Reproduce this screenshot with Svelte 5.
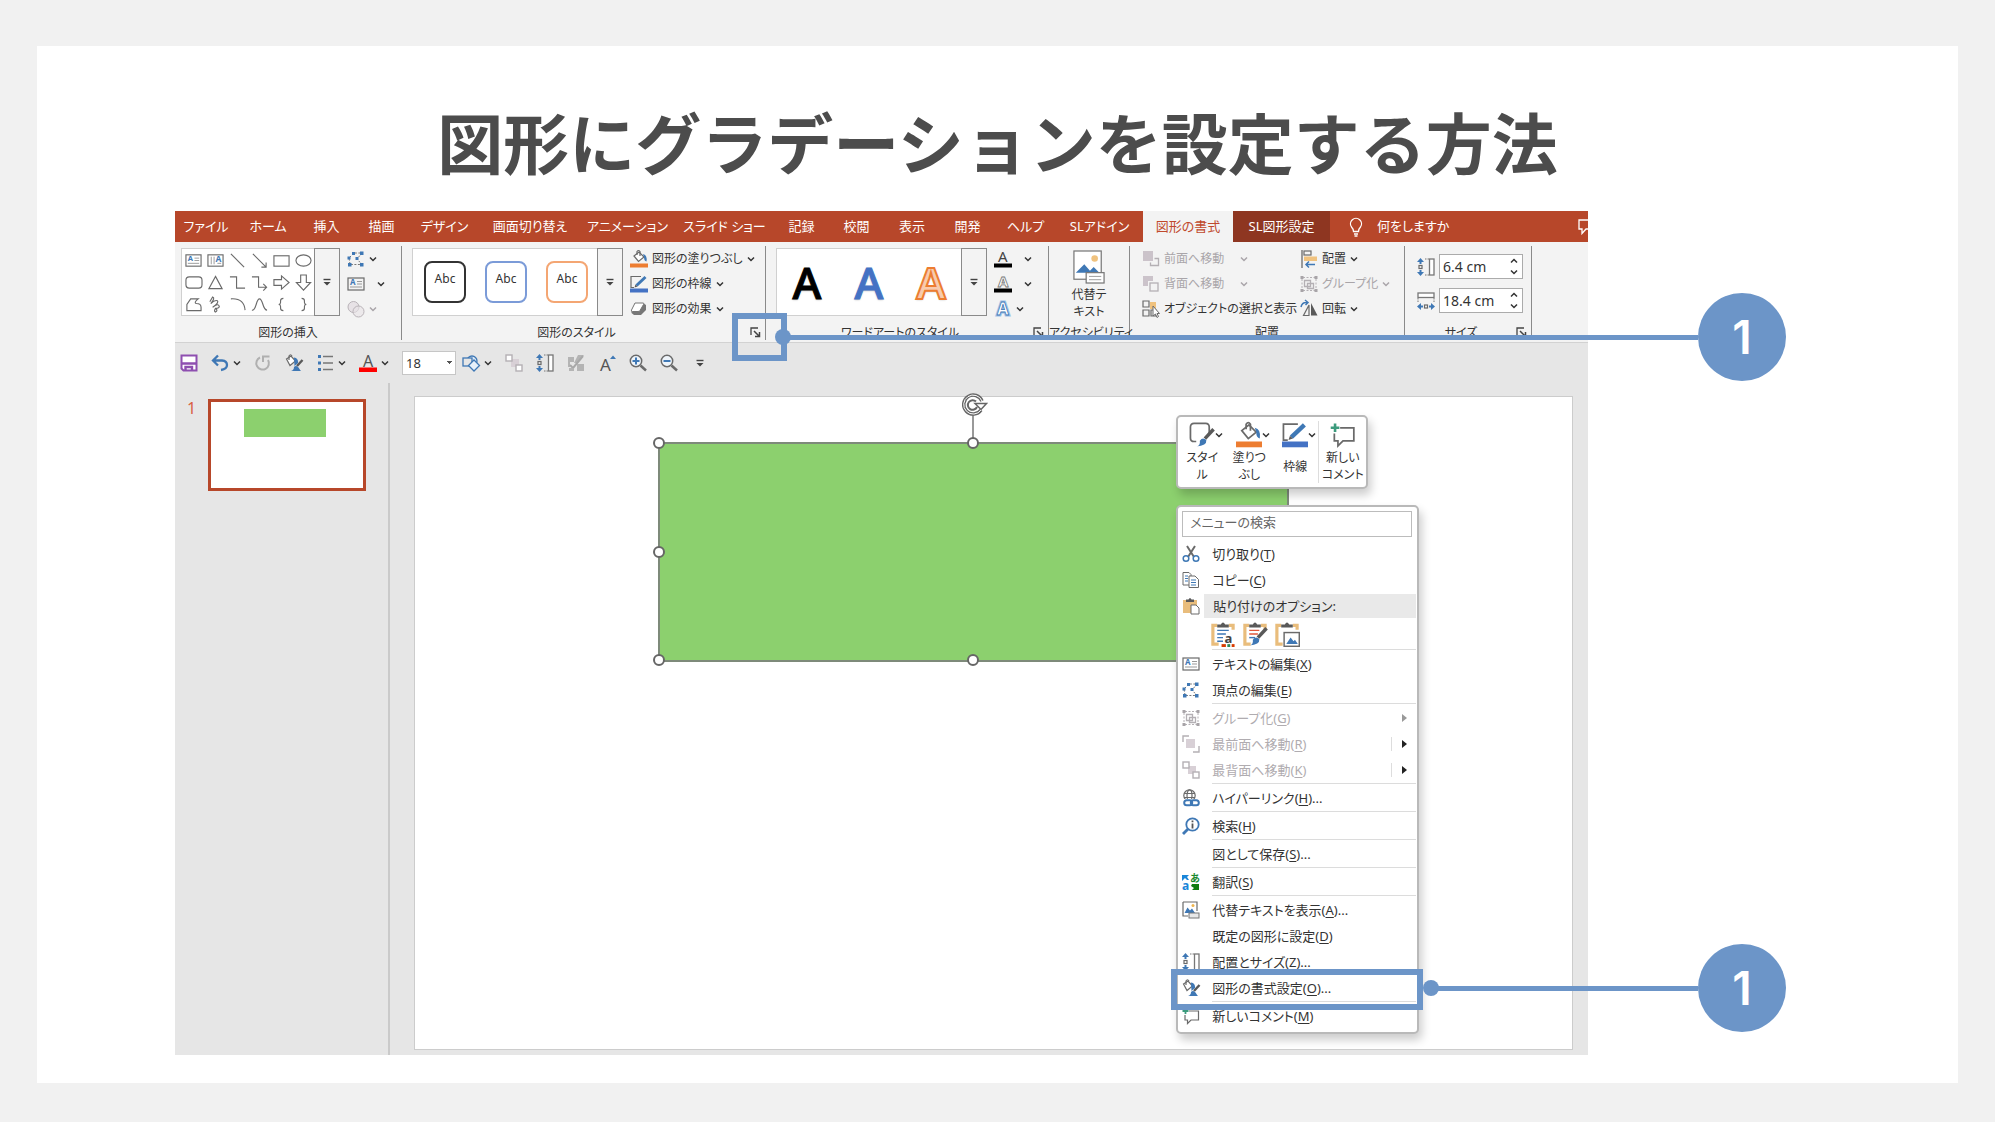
<script>
  const tabs = [
    'ファイル', 'ホーム', '挿入', '描画', 'デザイン', '画面切り替え', 'アニメーション',
    'スライド ショー', '記録', '校閲', '表示', '開発', 'ヘルプ', 'SLアドイン',
    '図形の書式', 'SL図形設定'
  ];

  const shapes = [
    'textbox', 'vtext', 'line', 'arrowline', 'rect', 'oval',
    'round', 'triangle', 'elbow', 'elbowarrow', 'rightarrow', 'downarrow',
    'freeform', 'scribble', 'arc', 'curve', 'lbrace', 'rbrace'
  ];

  const menu = [
    { icon: 'cut', label: '切り取り', key: 'T' },
    { icon: 'copy', label: 'コピー', key: 'C' },
    { paste: true },
    { sep: true },
    { icon: 'textbox', label: 'テキストの編集', key: 'X' },
    { icon: 'points', label: '頂点の編集', key: 'E' },
    { sep: true },
    { icon: 'group', label: 'グループ化', key: 'G', off: true, sub: 'off' },
    { icon: 'front', label: '最前面へ移動', key: 'R', off: true, sub: 'split' },
    { icon: 'back', label: '最背面へ移動', key: 'K', off: true, sub: 'split' },
    { sep: true },
    { icon: 'link', label: 'ハイパーリンク', key: 'H', more: true },
    { sep: true },
    { icon: 'lookup', label: '検索', key: 'H' },
    { sep: true },
    { icon: '', label: '図として保存', key: 'S', more: true },
    { sep: true },
    { icon: 'translate', label: '翻訳', key: 'S' },
    { sep: true },
    { icon: 'alt', label: '代替テキストを表示', key: 'A', more: true },
    { icon: '', label: '既定の図形に設定', key: 'D' },
    { icon: 'height', label: '配置とサイズ', key: 'Z', more: true },
    { icon: 'format', label: '図形の書式設定', key: 'O', more: true },
    { sep: true },
    { icon: 'comment', label: '新しいコメント', key: 'M' }
  ];

  const g = 'fill="none" stroke="#6a6a6a" stroke-width="1.2"';
  const b = 'fill="none" stroke="#3f78b5" stroke-width="1.5"';
  const sans = 'font-family="Noto Sans, sans-serif"';
  const boardBase = '<path d="M5 3H2V16H6M13 3H16V6" fill="none" stroke="#e9bd7c" stroke-width="2.2"/><path d="M5 4.500V2.500H7.500Q9-.5 10.500 2.500H13V4.500Z" fill="#595959"/>';
  const brush = '<path d="M17 5L11 11.500" stroke="#595959" stroke-width="2.400"/><path d="M5 17Q8 16.500 7.500 13Q9.500 10 12 12.500Q12.500 16.500 5 17Z" fill="#3f78b5"/>';

  const icons = {
    textbox: `<rect x="1" y="3" width="16" height="12" ${g}/><text x="3" y="10" ${sans} font-size="8" font-weight="700" fill="#3f78b5">A</text><path d="M10 6.500H15M10 9H15M3 12H15" stroke="#999"/>`,
    vtext: `<rect x="1" y="3" width="16" height="12" ${g}/><path d="M4.500 5V13M7.500 5V13M11 12H15" stroke="#999"/><text x="9" y="11" ${sans} font-size="9" font-weight="700" fill="#3f78b5">A</text>`,
    line: `<path d="M2 2L16 16" ${g}/>`,
    arrowline: `<path d="M2 2L16 16M16 11V16H11" ${g}/>`,
    rect: `<rect x="1" y="4" width="16" height="11" ${g}/>`,
    oval: `<ellipse cx="9" cy="9" rx="8" ry="6" ${g}/>`,
    round: `<rect x="1" y="3" width="17" height="12" rx="3.500" ${g}/>`,
    triangle: `<path d="M9 2.500L16 15.500H2Z" ${g}/>`,
    elbow: `<path d="M1 3H8V15H17" ${g}/>`,
    elbowarrow: `<path d="M1 3H8V14H16M13 10.500L16.500 14L13 17.500" ${g}/>`,
    rightarrow: `<path d="M1 6H9V2L17 9L9 16V12H1Z" ${g}/>`,
    downarrow: `<path d="M6 1V9H1.500L9 17L16.500 9H12V1Z" ${g}/>`,
    freeform: `<path d="M2 15.500V9L6 3H14Q9 7 12 8Q17 8 17 12V15.500Z" ${g}/>`,
    scribble: `<path d="M3 6L6 1Q9 2 4 8Q8 4 11 5Q13 7 6 12Q12 7 13 11Q13 13 9 13Q7 16 9 17Q12 15 9 13" ${g}/>`,
    arc: `<path d="M2 3Q16 2 17 15" ${g}/>`,
    curve: `<path d="M1 15C6 16 5 3 9 3S12 15 17 15" ${g}/>`,
    lbrace: `<path d="M11 2.500Q8 2.500 8 5V7Q8 9 6 9Q8 9 8 11V13Q8 15.500 11 15.500" ${g}/>`,
    rbrace: `<path d="M7 2.500Q10 2.500 10 5V7Q10 9 12 9Q10 9 10 11V13Q10 15.500 7 15.500" ${g}/>`,
    points: `<path d="M3 14L2 8L7 3H15L10 9L15 14.500H3" fill="none" stroke="#777" stroke-dasharray="2 1.500"/><path d="M5 2H8V5H5ZM13 1.500H16.500V5H13ZM.5 6.500H3.500V9.500H.5ZM8.500 7H11.500V10H8.500ZM1 13H4.500V16.500H1ZM13 13H16.500V16.500H13Z" fill="#3f78b5"/>`,
    merge: `<circle cx="6.500" cy="7" r="5.500" fill="#e7e2e6" stroke="#b9b3b8"/><circle cx="11.500" cy="11.500" r="5.500" fill="#e7e2e6" fill-opacity=".6" stroke="#b9b3b8"/>`,
    fill: `<path d="M4 6L9 2L14 7L8.500 11.500Z" fill="#fff" stroke="#6a6a6a" stroke-width="1.200"/><path d="M7 5V1.500Q8.500-.5 10 1.500V6" ${g}/><path d="M13 4Q17.500 5 16.500 11.500Q14 11 14 7Z" fill="#3f78b5"/><rect x="0" y="13.500" width="18" height="4" fill="#ed7d31"/>`,
    outline: `<path d="M11 1.500H1V12.500H4" ${g}/><path d="M6.500 10.500L15.500 2" stroke="#3f78b5" stroke-width="3"/><path d="M4.500 12.500L5.500 9.500L7.500 11.500Z" fill="#595959"/><rect x="0" y="13.500" width="18" height="4" fill="#4472c4"/>`,
    effect: `<path d="M5 3H13L16 5V10L11 15H4L1.500 13V11Z" fill="#777"/><path d="M5 3H13Q14.500 3 13.500 4.500L10 10.500Q9.500 11.500 8 11.500H2.500Q.8 11.500 1.500 10Z" fill="#fff" stroke="#777"/>`,
    textfill: `<text x="4" y="12" ${sans} font-size="15" fill="#444">A</text><rect y="13.500" width="18" height="4" fill="#000"/>`,
    textline: `<text x="4" y="12" ${sans} font-size="15" font-weight="700" fill="#fff" stroke="#777" stroke-width=".8">A</text><rect y="13.500" width="18" height="4" fill="#000"/>`,
    textglow: `<text x="3" y="15" ${sans} font-size="17" font-weight="700" fill="#fff" stroke="#9fc3e8" stroke-width="3">A</text><text x="3" y="15" ${sans} font-size="17" font-weight="700" fill="#fff" stroke="#3f78b5" stroke-width=".8">A</text>`,
    forward: `<rect x="1" y="1" width="10" height="10" fill="#cbc3ca"/><path d="M12.500 8.500H16.500V15.500H8.500V12.500" fill="none" stroke="#b4b0b4" stroke-width="1.300"/>`,
    backward: `<path d="M1 1H11V6H6V11H1Z" fill="#cbc3ca"/><rect x="8" y="8" width="8" height="8" fill="none" stroke="#b4b0b4" stroke-width="1.300"/>`,
    front: `<rect x="4" y="4" width="9" height="9" fill="#d8d0d6"/><path d="M7 1H1V7M17 11V17H11" fill="none" stroke="#b4b0b4" stroke-width="1.400"/>`,
    back: `<rect x="6" y="5" width="8" height="8" fill="#d8d0d6"/><g fill="#fff" stroke="#b4b0b4" stroke-width="1.400"><rect x="1" y="1" width="6" height="6"/><rect x="11" y="11" width="6" height="6"/></g>`,
    select: `<path d="M1 1H7V7H1ZM1 10H7V16H1ZM9 10H14V16H9Z" ${g}/><rect x="8" y="2" width="6" height="7" fill="#f0c27e"/><path d="M11 6V16L13.500 14L15 17.500L16.500 16.500L15 13.500H17.500Z" fill="#fff" stroke="#6a6a6a"/>`,
    align: `<path d="M2 0V18" stroke="#6a6a6a" stroke-width="1.300"/><rect x="4" y="1" width="7" height="4" ${g}/><rect x="4" y="6.500" width="13" height="4.500" fill="#f0c27e"/><path d="M15 14.500H6M9 11.500L6 14.500L9 17.500" ${b}/>`,
    group: `<path d="M3 2.500H15M3 15.500H15M2 4V14M16 4V14" stroke="#b4b0b4" stroke-dasharray="2 1.500"/><path d="M4.500 5.500H10.500V11.500H4.500ZM7.500 8.500H13.500V13.500H7.500Z" fill="none" stroke="#b4b0b4" stroke-width="1.300"/><path d="M.5 1H3.500V4H.5ZM14.500 1H17.500V4H14.500ZM.5 14H3.500V17H.5ZM14.500 14H17.500V17H14.500Z" fill="#a8a4a8"/>`,
    rotate: `<path d="M11 3V15.500H17.500Z" fill="#595959"/><path d="M9 5V15.500H3.500Z" ${g}/><path d="M1 7Q2 2 7 2.500M5 0L8 2.500L5.500 5" ${b}/>`,
    height: `<path d="M3.500 0L7 4H4.500V6H2.500V4H0ZM3.500 18L7 14H4.500V12H2.500V14H0Z" fill="#3f78b5"/><rect x="2" y="7.500" width="3" height="3" ${g}/><path d="M8 1H12M8 17H12" stroke="#777" stroke-dasharray="1.500 1"/><rect x="12.500" y="1" width="4.500" height="16" fill="#fff" stroke="#777" stroke-width="1.300"/>`,
    width: `<path d="M0 14.500L4 11V13.500H6V15.500H4V18ZM18 14.500L14 11V13.500H12V15.500H14V18Z" fill="#3f78b5"/><rect x="7.500" y="13" width="3" height="3" ${g}/><path d="M1 6V10M17 6V10" stroke="#777" stroke-dasharray="1.500 1"/><rect x="1" y="1" width="16" height="4.500" fill="#fff" stroke="#777" stroke-width="1.300"/>`,
    save: `<path d="M1.500 1.500H16.500V16.500H3.500L1.500 14.500Z" fill="#fff" stroke="#8e4fb0" stroke-width="2"/><path d="M2 9.500H16M5.500 17V13H12V17" fill="none" stroke="#8e4fb0" stroke-width="2.400"/>`,
    undo: `<path d="M7 1.500L2 6.500L7 11.500M2 6.500H11Q16 7 16 11Q16 15 10 16" fill="none" stroke="#3f78b5" stroke-width="2.300"/>`,
    redo: `<path d="M6 3.500A6.300 6.300 0 1 0 14 6M9 8V2.500H15.500" fill="none" stroke="#b0b0b0" stroke-width="2"/>`,
    format: `<path d="M1.500 5L6 2L10.500 7L5 11.500Z" fill="#fff" stroke="#6a6a6a" stroke-width="1.200"/><path d="M4 6V2Q5.500-.5 7 2" ${g}/><path d="M9 3.500Q13.500 4 13 9L9.500 12Z" fill="#3f78b5"/><path d="M17.500 6L12 12" stroke="#595959" stroke-width="2.400"/><path d="M6 17Q9 16 9 13Q11 11 13.500 13.500Q15 16 16 17Z" fill="#3f78b5"/>`,
    bullets: `<path d="M2 1H5V4H2ZM2 7.500H5V10.500H2ZM2 14H5V17H2Z" fill="#3f78b5"/><path d="M7 2.500H17M7 9H17M7 15.500H17" stroke="#777" stroke-width="1.300"/>`,
    fontcolor: `<text x="4" y="13" ${sans} font-size="16" fill="#555">A</text><rect y="13.500" width="18" height="4.500" fill="#f00"/>`,
    shapes: `<circle cx="10" cy="7" r="5" fill="#dce9f6" stroke="#3f78b5" stroke-width="1.300"/><rect x="1" y="4" width="9" height="8" fill="#e6e6e6" stroke="#3f78b5" stroke-width="1.300"/><path d="M12 6L17.500 11.500L12 17L6.500 11.500Z" fill="#e6f0fa" stroke="#3f78b5" stroke-width="1.300"/>`,
    grayed: `<path d="M1 3H7V8H3V13H1ZM11 1L17 1L10 9L7 9Z" fill="#b4b4b4"/><path d="M3 11L6 14L16 2" fill="none" stroke="#a8a8a8" stroke-width="2"/><path d="M10 10H17V17H10ZM2 14H7V17H2Z" fill="#b4b4b4"/>`,
    grow: `<text x="2" y="17" ${sans} font-size="17" fill="#555">A</text><path d="M12 5L15 1.500L18 5Z" fill="#3f78b5"/>`,
    zoomin: `<circle cx="7" cy="7" r="5.700" fill="#eef4fa" stroke="#6a6a6a" stroke-width="1.500"/><path d="M11.500 11.500L17 16.500" stroke="#6a6a6a" stroke-width="2.500"/><path d="M3.500 7H10.500M7 3.500V10.500" stroke="#3f78b5" stroke-width="2"/>`,
    zoomout: `<circle cx="7" cy="7" r="5.700" fill="#eef4fa" stroke="#6a6a6a" stroke-width="1.500"/><path d="M11.500 11.500L17 16.500" stroke="#6a6a6a" stroke-width="2.500"/><path d="M3.500 7H10.500" stroke="#3f78b5" stroke-width="2"/>`,
    more: `<path d="M5.500 6.500H12.500" stroke="#444" stroke-width="1.400"/><path d="M5.500 9H12.500L9 12.500Z" fill="#444"/>`,
    launch: `<path d="M3 10V3H10" fill="none" stroke="#444" stroke-width="1.300"/><path d="M6 6L11 11M11.500 7V11.500H7" fill="none" stroke="#444" stroke-width="1.500"/>`,
    cut: `<path d="M5 1L12 12M13 1L6 12" stroke="#6a6a6a" stroke-width="2"/><circle cx="4" cy="13.500" r="2.800" ${b}/><circle cx="14" cy="13.500" r="2.800" ${b}/>`,
    copy: `<path d="M1 1.500H7L9 3.500V14H1Z" fill="#fff" stroke="#6a6a6a"/><path d="M3 5H6M3 7.500H6M3 10H6" stroke="#3f78b5"/><path d="M7 5H13L16.500 8.500V16.500H7Z" fill="#fff" stroke="#6a6a6a"/><path d="M9 9H14M9 11.500H14M9 14H14" stroke="#3f78b5"/>`,
    paste: `<path d="M1 3H15V8H9V16H1Z" fill="#e9bd7c"/><path d="M4 5V2.500H6.500Q8-.5 9.500 2.500H12V5Z" fill="#595959"/><path d="M9 8H14L17 11V17H9Z" fill="#fff" stroke="#6a6a6a"/>`,
    pastea: `${boardBase}<path d="M5 6.500H13M5 9H11M5 11.500H9M5 14H9" stroke="#3f78b5"/><text x="10" y="15" ${sans} font-size="9" font-weight="700" fill="#444">a</text><path d="M8 16H11V18H8Z" fill="#d83b01"/><path d="M12 16H14V18H12Z" fill="#2e8b57"/><path d="M15 16H17V18H15Z" fill="#d83b01"/>`,
    pasteb: `${boardBase}<path d="M5 6.500H12M5 9H11" stroke="#e0583c"/><path d="M5 11.500H9" stroke="#3f78b5"/>${brush}`,
    pastec: `${boardBase}<rect x="7" y="8" width="10.500" height="9.500" fill="#fff" stroke="#6a6a6a"/><path d="M8.500 16L11.500 11.500L13.500 14L14.500 13L16.500 16Z" fill="#3f78b5"/>`,
    link: `<circle cx="7.500" cy="6.500" r="5.700" ${g}/><ellipse cx="7.500" cy="6.500" rx="2.500" ry="5.700" ${g}/><path d="M2 4.500H13M2 8.500H13" stroke="#6a6a6a"/><path d="M0 10H18V18H0Z" fill="#fff"/><rect x="2.200" y="11.200" width="8" height="5" rx="2.500" fill="none" stroke="#3f78b5" stroke-width="2"/><rect x="8.800" y="11.200" width="8" height="5" rx="2.500" fill="none" stroke="#3f78b5" stroke-width="2"/>`,
    lookup: `<circle cx="10.500" cy="7.500" r="6.200" fill="none" stroke="#3f78b5" stroke-width="1.800"/><path d="M6 12L1 17" stroke="#3f78b5" stroke-width="2.800"/><path d="M10.500 3.500V5.200M10.500 6.500V11.500" stroke="#555" stroke-width="1.800"/>`,
    translate: `<path d="M0 2H7L5 4L7 7H5L3 5L0 8Z" fill="#1a86d9"/><text x="0" y="17" ${sans} font-size="12" font-weight="700" fill="#1a86d9">a</text><text x="8" y="9" font-family="Noto Sans CJK JP, sans-serif" font-size="10" font-weight="700" fill="#1b8a2f">あ</text><path d="M10 11H17V17H10L12 15L9 13Z" fill="#107c10"/>`,
    alt: `<path d="M1 1H15V10M6 15H1V1" ${g}/><circle cx="11" cy="4.500" r="1.500" fill="#f0b54e"/><path d="M2.500 12L5.500 6.500L8 9.500L10 7.500L13 12Z" fill="#3f78b5"/><rect x="7" y="12" width="10" height="5" fill="#e8e8e8" stroke="#777"/>`,
    comment: `<path d="M7 4H16.500V13H9L5.500 16.500V13H3V8" ${g}/><path d="M.5 4H6.500M3.500 1V7" stroke="#3c9b7d" stroke-width="1.800"/>`,
    style: `<path d="M14 8V3.500Q14 1 11.500 1H3.500Q1 1 1 3.500V11Q1 13.500 3.500 13.500H5" ${g}/>${brush}`
  };
</script>

{#snippet icon(name, cls = '')}
  <svg class="icon {cls}" viewBox="0 0 18 18" aria-hidden="true">{@html icons[name]}</svg>
{/snippet}

{#snippet chev(cls = '')}
  <svg class="chev {cls}" viewBox="0 0 8 8" aria-hidden="true">
    <path d="M1 2.500L4 5.500L7 2.500" fill="none" stroke="currentColor" stroke-width="1.500" />
  </svg>
{/snippet}

{#snippet tool(name, text, arrow = true, cls = '')}
  <button class="tool {cls}" aria-label={text || name}>
    {@render icon(name)}{#if text}<span>{text}</span>{/if}{#if arrow}{@render chev()}{/if}
  </button>
{/snippet}

{#snippet launcher(name)}
  <button class="launcher" aria-label={name}>
    <svg viewBox="0 0 14 14">{@html icons.launch}</svg>
  </button>
{/snippet}

{#snippet size(id, name, label, value)}
  <div class="size">
    <label for={id} aria-label={label}>{@render icon(name)}</label>
    <span class="spin">
      <input {id} type="text" {value} />
      <span class="steps">
        <button aria-label="{label}を増やす">{@render chev('up')}</button>
        <button aria-label="{label}を減らす">{@render chev()}</button>
      </span>
    </span>
  </div>
{/snippet}

<main>
  <article>
    <h1>図形にグラデーションを設定する方法</h1>

    <section class="app">
      <nav class="tabs">
        {#each tabs as tab, i}
          <button class:active={i === 14} class:dark={i === 15}>{tab}</button>
        {/each}
        <button class="tell">
          <svg class="bulb" viewBox="0 0 14 20" aria-hidden="true">
            <path d="M4.500 14.500Q4.500 12 2.500 10A5.500 5.500 0 1 1 11.500 10Q9.500 12 9.500 14.500ZM5 17H9M5.500 19H8.500" fill="none" stroke="#fff" stroke-width="1.300" />
          </svg>
          <span>何をしますか</span>
        </button>
        <button class="note" aria-label="コメント">
          <svg viewBox="0 0 10 16" aria-hidden="true">
            <path d="M12 1H1V10H4V14.500L8 10H12" fill="none" stroke="#fff" stroke-width="1.300" />
          </svg>
        </button>
      </nav>

      <div class="ribbon">
        <div class="group insert">
          <div class="body">
            <div class="gallery">
              <div class="shapes">
                {#each shapes as s}<button aria-label={s}>{@render icon(s, 'small')}</button>{/each}
              </div>
              <button class="expand" aria-label="その他の図形">{@render icon('more')}</button>
            </div>
            <div class="stack">
              {@render tool('points', '')}
              {@render tool('textbox', '', true, 'wide')}
              {@render tool('merge', '', true, 'off')}
            </div>
          </div>
          <div class="label"><span>図形の挿入</span></div>
        </div>

        <div class="group styles">
          <div class="body">
            <div class="gallery">
              <div class="presets">
                <button class="black">Abc</button>
                <button class="blue">Abc</button>
                <button class="orange">Abc</button>
              </div>
              <button class="expand" aria-label="その他のスタイル">{@render icon('more')}</button>
            </div>
            <div class="stack">
              {@render tool('fill', '図形の塗りつぶし')}
              {@render tool('outline', '図形の枠線')}
              {@render tool('effect', '図形の効果')}
            </div>
          </div>
          <div class="label"><span>図形のスタイル</span>{@render launcher('図形の書式設定')}</div>
        </div>

        <div class="group art">
          <div class="body">
            <div class="gallery">
              <div class="letters">
                <button class="black">A</button>
                <button class="blue">A</button>
                <button class="orange">A</button>
              </div>
              <button class="expand" aria-label="その他のワードアート">{@render icon('more')}</button>
            </div>
            <div class="stack">
              {@render tool('textfill', '', true, 'wide')}
              {@render tool('textline', '', true, 'wide')}
              {@render tool('textglow', '')}
            </div>
          </div>
          <div class="label"><span>ワードアートのスタイル</span>{@render launcher('文字の効果の設定')}</div>
        </div>

        <div class="group access">
          <button class="body big">
            <svg viewBox="0 0 34 36" aria-hidden="true">
              <rect x="1" y="1" width="29" height="30" fill="#fff" stroke="#777" stroke-width="1.300" />
              <circle cx="23" cy="9" r="3.500" fill="#f0c27e" />
              <path d="M3 24L12 15L18 22L22 18L28 24Z" fill="#3f78b5" />
              <rect x="14" y="24" width="19" height="11" fill="#fff" stroke="#777" stroke-width="1.300" />
              <path d="M17 28H30M17 31.500H30" stroke="#999" />
            </svg>
            <span>代替テ<br />キスト</span>
          </button>
          <div class="label"><span>アクセシビリティ</span></div>
        </div>

        <div class="group arrange">
          <div class="body">
            <div class="stack">
              {@render tool('forward', '前面へ移動', true, 'off split')}
              {@render tool('backward', '背面へ移動', true, 'off split')}
              {@render tool('select', 'オブジェクトの選択と表示', false)}
            </div>
            <div class="stack">
              {@render tool('align', '配置')}
              {@render tool('group', 'グループ化', true, 'off')}
              {@render tool('rotate', '回転')}
            </div>
          </div>
          <div class="label"><span>配置</span></div>
        </div>

        <div class="group sizes">
          <div class="body">
            {@render size('shape-height', 'height', '高さ', '6.4 cm')}
            {@render size('shape-width', 'width', '幅', '18.4 cm')}
          </div>
          <div class="label"><span>サイズ</span>{@render launcher('サイズと位置')}</div>
        </div>
      </div>

      <div class="quick">
        <div>
          {@render tool('save', '', false)}
          {@render tool('undo', '')}
          {@render tool('redo', '', false)}
          {@render tool('format', '', false)}
          {@render tool('bullets', '')}
          {@render tool('fontcolor', '')}
          <select aria-label="フォント サイズ"><option>18</option></select>
        </div>
        <div>
          {@render tool('shapes', '')}
          {@render tool('back', '', false)}
          {@render tool('height', '', false)}
          {@render tool('grayed', '', false)}
          {@render tool('grow', '', false)}
          {@render tool('zoomin', '', false)}
          {@render tool('zoomout', '', false)}
          {@render tool('more', '', false)}
        </div>
      </div>

      <div class="work">
        <aside>
          <span>1</span>
          <button class="thumb" aria-label="スライド 1"><i></i></button>
        </aside>
        <div class="stage">
          <div class="slide">
            <div class="shape">
              <i class="stem"></i>
              <svg class="turn" viewBox="0 0 28 26" aria-hidden="true">
                <g fill="none" stroke="#666">
                  <path d="M22 9A9.500 9.500 0 1 0 21 18" stroke-width="3.500" />
                  <path d="M22 9A9.500 9.500 0 1 0 21 18" stroke="#fff" stroke-width="1" />
                  <path d="M15 11.500H26.500L21 17.500Z" fill="#fff" stroke-width="1.500" />
                  <path d="M16 9.500A4.800 4.800 0 1 0 17 15" stroke-width="2" />
                </g>
              </svg>
              <i class="grip nw"></i><i class="grip n"></i><i class="grip w"></i>
              <i class="grip sw"></i><i class="grip s"></i>
            </div>

            <div class="mini">
              <button>{@render icon('style', 'large')}{@render chev()}<span>スタイ<br />ル</span></button>
              <button>{@render icon('fill', 'large')}{@render chev()}<span>塗りつ<br />ぶし</span></button>
              <button>{@render icon('outline', 'large')}{@render chev()}<span>枠線</span></button>
              <button class="new">{@render icon('comment', 'large')}<span>新しい<br />コメント</span></button>
            </div>

            <div class="menu">
              <input type="text" placeholder="メニューの検索" aria-label="メニューの検索" />
              {#each menu as item}
                {#if item.sep}
                  <hr />
                {:else if item.paste}
                  <div class="head">{@render icon('paste')}<span>貼り付けのオプション:</span></div>
                  <div class="paste">
                    {#each ['pastea', 'pasteb', 'pastec'] as p}
                      <button aria-label={p}>{@render icon(p, 'large')}</button>
                    {/each}
                  </div>
                {:else}
                  <button class="item" class:off={item.off}>
                    {@render icon(item.icon)}
                    <span>{item.label}(<u>{item.key}</u>){item.more ? '...' : ''}</span>
                    {#if item.sub}<i class="sub {item.sub}"></i>{/if}
                  </button>
                {/if}
              {/each}
            </div>
          </div>
        </div>
      </div>

      <div class="mark launch"></div>
      <div class="mark row"></div>
      <div class="callout first"><i></i><b>1</b></div>
      <div class="callout last"><i></i><b>1</b></div>
    </section>
  </article>
</main>

<style>
  :global(body) {
    background: #f1f1f1;
  }

  main {
    box-sizing: border-box;
    min-height: 100vh;
    padding: 46px 37px 40px;
    color: #333;
    font: 13px/18px 'Noto Sans', 'Noto Sans CJK JP', sans-serif;
    font-feature-settings: 'palt';
  }

  article {
    padding-bottom: 28px;
    background: #fff;
  }

  h1 {
    margin: 0;
    padding: 44px 0 21px;
    color: #4c4c4c;
    font: 700 66px/100px 'Noto Sans CJK JP', sans-serif;
    font-feature-settings: normal;
    text-align: center;
  }

  button,
  input,
  select {
    margin: 0;
    padding: 0;
    border: 0;
    background: none;
    color: inherit;
    font: inherit;
    font-feature-settings: inherit;
  }

  i {
    display: block;
  }

  .icon {
    flex: none;
    width: 18px;
    height: 18px;
    overflow: visible;
  }

  .icon.large {
    width: 26px;
    height: 26px;
  }

  .chev {
    flex: none;
    width: 8px;
    height: 8px;
  }

  .chev.up {
    rotate: 180deg;
  }

  .app {
    position: relative;
    margin: 0 370px 0 138px;
    background: #e6e6e6;
  }

  /* tab strip */
  .tabs {
    display: grid;
    grid-template-columns: 62px 62px 55px 55px 71px 100px 95px 99px 55px 55px 56px 55px 61px 87px 90px 97px 1fr 10px;
    height: 31px;
    background: #b7472a;
    color: #fff;
  }

  .tabs button {
    white-space: nowrap;
    line-height: 29px;
  }

  .tabs .active {
    background: #f3f3f3;
    color: #c0492c;
  }

  .tabs .dark {
    background: #8e3621;
  }

  .tabs .tell {
    display: flex;
    align-items: center;
    gap: 14px;
    padding-left: 19px;
  }

  .bulb {
    width: 14px;
    height: 20px;
  }

  .note svg {
    display: block;
    width: 10px;
    height: 16px;
  }

  /* ribbon */
  .ribbon {
    display: grid;
    grid-template-columns: 227px 364px 283px 81px 275px 127px;
    padding: 4px 0 2px;
    border-bottom: 1px solid #d2d2d2;
    background: #f3f3f3;
    font-size: 12px;
  }

  .group {
    border-right: 1px solid #8a8a8a;
  }

  .body {
    display: flex;
    height: 78px;
  }

  .label {
    display: flex;
    height: 16px;
    padding: 0 3px;
    line-height: 18px;
    white-space: nowrap;
  }

  .label span {
    flex: 1;
    text-align: center;
  }

  .launcher svg {
    display: block;
    width: 14px;
    height: 14px;
  }

  .gallery {
    display: flex;
    height: 68px;
    box-sizing: border-box;
    margin: 2px 7px 0 10px;
    border: 1px solid #d0d0d0;
    background: #fff;
  }

  .insert .gallery {
    margin-left: 6px;
  }

  .expand {
    display: grid;
    place-items: center;
    width: 26px;
    margin: -1px;
    border: 1px solid #8a8a8a;
    background: #f3f3f3;
  }

  .shapes {
    display: grid;
    grid-template-columns: repeat(6, 22px);
    grid-auto-rows: 22px;
    width: 133px;
  }

  .shapes button {
    display: grid;
    place-items: center;
  }

  .icon.small {
    width: 17px;
    height: 17px;
  }

  .presets,
  .letters {
    display: flex;
    align-items: center;
    gap: 19px;
    width: 174px;
    padding-left: 11px;
  }

  .presets button,
  .letters button {
    width: 42px;
  }

  .letters {
    gap: 20px;
    width: 176px;
    padding-left: 9px;
  }

  .presets button {
    height: 42px;
    padding-bottom: 6px;
    border: 2px solid;
    border-radius: 8px;
    font-size: 12px;
    line-height: 16px;
  }

  .presets .black {
    border-color: #333;
  }

  .presets .blue {
    border-color: #7b9bd8;
  }

  .presets .orange {
    border-color: #f4a673;
  }

  .letters button {
    font: 500 44px/60px 'Noto Sans', sans-serif;
    text-shadow: 0 1px 2px #bbb;
    -webkit-text-stroke: 1px;
  }

  .letters .black {
    color: #000;
  }

  .letters .blue {
    color: #4472c4;
  }

  .letters .orange {
    color: #f8cbad;
    font-weight: 600;
    -webkit-text-stroke: 2px #ed7d31;
  }

  .stack {
    display: grid;
    grid-auto-rows: 25px;
    align-content: start;
    justify-items: start;
  }

  .tool {
    display: flex;
    align-items: center;
    gap: 4px;
    white-space: nowrap;
  }

  .tool.off {
    color: #a9a5a9;
  }

  .tool.wide {
    gap: 12px;
  }

  .tool.split .chev {
    margin-left: 12px;
  }

  .big {
    width: 80px;
    flex-direction: column;
    align-items: center;
    gap: 2px;
    padding-top: 4px;
    line-height: 17px;
  }

  .big svg {
    flex: none;
    width: 32px;
    height: 34px;
  }

  .access .label {
    padding: 0;
  }

  .arrange .body {
    padding-left: 12px;
  }

  .arrange .stack:first-child {
    width: 158px;
  }

  .sizes .body {
    flex-direction: column;
    gap: 9px;
    height: 70px;
    padding: 8px 8px 0 12px;
    font-size: 14px;
  }

  .size {
    display: flex;
    align-items: center;
    gap: 4px;
  }

  .size label {
    display: flex;
  }

  .spin {
    display: flex;
    flex: 1;
    height: 23px;
    border: 1px solid #ababab;
    background: #fff;
  }

  .spin input {
    flex: 1;
    width: 0;
    padding-left: 3px;
  }

  .steps {
    display: grid;
    padding-right: 4px;
  }

  .steps button {
    display: grid;
    place-items: center;
  }

  /* quick access bar */
  .quick {
    display: flex;
    gap: 6px;
    height: 40px;
    padding: 0 5px;
  }

  .quick div {
    display: flex;
    align-items: center;
    gap: 13px;
  }

  .quick select {
    appearance: none;
    width: 54px;
    height: 24px;
    padding-left: 3px;
    border: 1px solid #c6c6c6;
    background:
      linear-gradient(#555, #555) 44px 9px / 5px 1px no-repeat,
      linear-gradient(#555, #555) 45px 10px / 3px 1px no-repeat,
      linear-gradient(#555, #555) 46px 11px / 1px 1px no-repeat,
      #fff;
  }

  /* workspace */
  .work {
    display: grid;
    grid-template-columns: 215px 1fr;
  }

  aside {
    display: flex;
    align-items: flex-start;
    gap: 12px;
    padding: 16px 0 0 12px;
    border-right: 2px solid #cacaca;
    color: #d95f43;
    font-size: 16px;
  }

  aside span {
    width: 9px;
  }

  .thumb {
    box-sizing: border-box;
    width: 158px;
    height: 92px;
    padding-left: 33px;
    border: 3px solid #b7472a;
    background: #fff;
  }

  .thumb i {
    width: 82px;
    height: 28px;
    margin-bottom: 44px;
    background: #8cd06e;
  }

  .stage {
    padding: 13px 15px 5px 24px;
  }

  .slide {
    position: relative;
    box-sizing: border-box;
    aspect-ratio: 1158 / 653;
    border: 1px solid #ccc;
    background: #fff;
  }

  .shape {
    position: absolute;
    box-sizing: border-box;
    top: 6.9%;
    left: 21%;
    width: 54.5%;
    height: 33.8%;
    border: 2px solid #7e8a7a;
    background: #8cd06e;
  }

  .stem {
    position: absolute;
    top: -30px;
    left: 50%;
    width: 2px;
    height: 30px;
    margin-left: -1px;
    background: #999;
  }

  .turn {
    position: absolute;
    top: -52px;
    left: 50%;
    width: 28px;
    height: 26px;
    margin-left: -13px;
  }

  .grip {
    position: absolute;
    box-sizing: border-box;
    width: 12px;
    height: 12px;
    margin: -6px;
    border: 2px solid #666;
    border-radius: 50%;
    background: #fff;
  }

  .nw { top: -1px; left: -1px; }
  .n { top: -1px; left: 50%; }
  .w { top: 50%; left: -1px; }
  .sw { top: 100%; left: -1px; }
  .s { top: 100%; left: 50%; }

  .mini,
  .menu {
    position: absolute;
    left: 65.8%;
    box-sizing: border-box;
    border: 2px solid #b9b9b9;
    border-radius: 5px;
    background: #fff;
    box-shadow: 3px 6px 10px #0003;
  }

  .mini {
    top: 18px;
    display: grid;
    grid-template-columns: 48px 46px 46px 48px;
    width: 192px;
    height: 74px;
    padding: 4px 0;
    font-size: 12px;
  }

  .mini button {
    display: grid;
    grid-template-columns: 8px 26px 8px;
    grid-template-rows: 28px 34px;
    justify-content: center;
    align-items: center;
    line-height: 17px;
  }

  .mini .icon {
    grid-column: 2;
  }

  .mini .new {
    border-left: 1px solid #ddd;
  }

  .mini span {
    grid-column: 1 / 4;
    justify-self: center;
    white-space: nowrap;
  }

  .menu {
    top: 108px;
    width: 243px;
    padding: 4px 1px 3px 4px;
  }

  .menu input {
    box-sizing: border-box;
    width: 230px;
    height: 26px;
    margin: 0 0 4px;
    padding: 0 7px 4px;
    border: 1px solid #bcbcbc;
  }

  .menu input::placeholder {
    color: #666;
  }

  .item,
  .head {
    display: flex;
    align-items: center;
    gap: 12px;
    width: 100%;
    height: 26px;
    text-align: left;
    white-space: nowrap;
  }

  .item.off {
    color: #b0acb0;
  }

  .item u {
    text-underline-offset: 2px;
  }

  .head {
    gap: 4px;
  }

  .head span {
    flex: 1;
    padding: 3px 9px;
    background: #e9e9e9;
  }

  .paste {
    display: flex;
    gap: 6px;
    height: 30px;
    padding-left: 28px;
    align-items: center;
  }

  .paste button {
    height: 26px;
  }

  hr {
    height: 1px;
    margin: 0 0 1px 30px;
    border: 0;
    background: #dcdcdc;
  }

  .sub {
    display: flex;
    align-items: center;
    justify-content: flex-end;
    height: 14px;
    margin-left: auto;
    padding: 0 9px 0 10px;
  }

  .sub::after {
    border: 4px solid transparent;
    border-left: 5px solid #222;
    border-right: 0;
    content: '';
  }

  .sub.off::after {
    border-left-color: #999;
  }

  .sub.split {
    border-left: 1px solid #ddd;
  }

  /* annotations */
  .mark {
    position: absolute;
    box-sizing: border-box;
    border: 6px solid #6c95c8;
  }

  .mark.launch {
    top: 102px;
    left: 557px;
    width: 55px;
    height: 48px;
  }

  .mark.row {
    top: 758px;
    left: 70.5%;
    width: 252px;
    height: 41px;
  }

  .callout {
    position: absolute;
    right: -198px;
    display: flex;
    align-items: center;
  }

  .callout.first {
    top: 82px;
    left: 600px;
  }

  .callout.last {
    top: 733px;
    left: 88.3%;
  }

  .callout i {
    flex: 1;
    height: 5px;
    background: #6c95c8;
  }

  .callout::before {
    width: 16px;
    height: 16px;
    margin-right: -5px;
    border-radius: 50%;
    background: #6c95c8;
    content: '';
  }

  .callout b {
    width: 88px;
    border-radius: 50%;
    background: #6c95c8;
    color: #fff;
    font: 600 46px/88px Inter, sans-serif;
    text-align: center;
  }
</style>
